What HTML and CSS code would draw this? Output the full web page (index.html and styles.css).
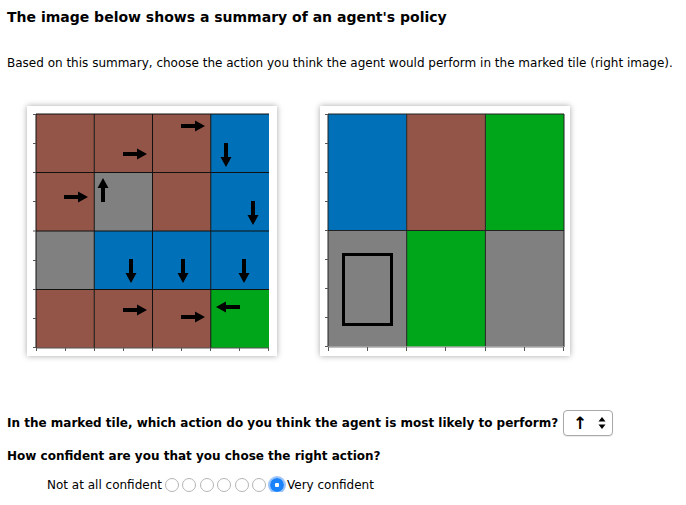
FILE: index.html
```html
<!DOCTYPE html>
<html>
<head>
<meta charset="utf-8">
<link rel="stylesheet" href="styles.css">
</head>
<body>
<h1 class="title">The image below shows a summary of an agent's policy</h1>
<p class="intro">Based on this summary, choose the action you think the agent would perform in the marked tile (right image).</p>

<div class="figures">
  <div class="frame">
    <svg width="250" height="250" viewBox="0 0 250 250">
      <defs>
        <path id="arr" d="M0 -2 H14 V-5.5 L24 0 L14 5.5 V2 H0 Z" fill="#000"/>
      </defs>
      <!-- row 0 -->
      <rect x="9" y="8" width="58.25" height="58.5" fill="#935548"/>
      <rect x="67.25" y="8" width="58.25" height="58.5" fill="#935548"/>
      <rect x="125.5" y="8" width="58.25" height="58.5" fill="#935548"/>
      <rect x="183.75" y="8" width="58.25" height="58.5" fill="#0070b8"/>
      <!-- row 1 -->
      <rect x="9" y="66.5" width="58.25" height="58.5" fill="#935548"/>
      <rect x="67.25" y="66.5" width="58.25" height="58.5" fill="#808080"/>
      <rect x="125.5" y="66.5" width="58.25" height="58.5" fill="#935548"/>
      <rect x="183.75" y="66.5" width="58.25" height="58.5" fill="#0070b8"/>
      <!-- row 2 -->
      <rect x="9" y="125" width="58.25" height="58.5" fill="#808080"/>
      <rect x="67.25" y="125" width="58.25" height="58.5" fill="#0070b8"/>
      <rect x="125.5" y="125" width="58.25" height="58.5" fill="#0070b8"/>
      <rect x="183.75" y="125" width="58.25" height="58.5" fill="#0070b8"/>
      <!-- row 3 -->
      <rect x="9" y="183.5" width="58.25" height="58.5" fill="#935548"/>
      <rect x="67.25" y="183.5" width="58.25" height="58.5" fill="#935548"/>
      <rect x="125.5" y="183.5" width="58.25" height="58.5" fill="#935548"/>
      <rect x="183.75" y="183.5" width="58.25" height="58.5" fill="#00a619"/>
      <!-- grid -->
      <g stroke="#111" stroke-width="1" fill="none">
        <line x1="67.25" y1="8" x2="67.25" y2="242"/>
        <line x1="125.5" y1="8" x2="125.5" y2="242"/>
        <line x1="183.75" y1="8" x2="183.75" y2="242"/>
        <line x1="9" y1="66.5" x2="242" y2="66.5"/>
        <line x1="9" y1="125" x2="242" y2="125"/>
        <line x1="9" y1="183.5" x2="242" y2="183.5"/>
        <line x1="9" y1="8" x2="242" y2="8"/>
        <line x1="9" y1="8" x2="9" y2="242"/>
      </g>
      <g stroke="#555" stroke-width="1">
        <line x1="9" y1="242" x2="242" y2="242"/>
        <line x1="6" y1="8.5" x2="9" y2="8.5"/>
        <line x1="6" y1="37.5" x2="9" y2="37.5"/>
        <line x1="6" y1="66.5" x2="9" y2="66.5"/>
        <line x1="6" y1="95.5" x2="9" y2="95.5"/>
        <line x1="6" y1="125" x2="9" y2="125"/>
        <line x1="6" y1="154.5" x2="9" y2="154.5"/>
        <line x1="6" y1="183.5" x2="9" y2="183.5"/>
        <line x1="6" y1="212.5" x2="9" y2="212.5"/>
        <line x1="6" y1="241.5" x2="9" y2="241.5"/>
        <line x1="9.5" y1="242" x2="9.5" y2="245"/>
        <line x1="38.5" y1="242" x2="38.5" y2="245"/>
        <line x1="67.5" y1="242" x2="67.5" y2="245"/>
        <line x1="96.5" y1="242" x2="96.5" y2="245"/>
        <line x1="125.5" y1="242" x2="125.5" y2="245"/>
        <line x1="154.5" y1="242" x2="154.5" y2="245"/>
        <line x1="183.5" y1="242" x2="183.5" y2="245"/>
        <line x1="212.5" y1="242" x2="212.5" y2="245"/>
        <line x1="241.5" y1="242" x2="241.5" y2="245"/>
      </g>
      <!-- arrows -->
      <use href="#arr" transform="translate(154 20)"/>
      <use href="#arr" transform="translate(96 48)"/>
      <use href="#arr" transform="translate(199 37) rotate(90)"/>
      <use href="#arr" transform="translate(37 91)"/>
      <use href="#arr" transform="translate(76 96) rotate(-90)"/>
      <use href="#arr" transform="translate(226 95) rotate(90)"/>
      <use href="#arr" transform="translate(104 153) rotate(90)"/>
      <use href="#arr" transform="translate(156 153) rotate(90)"/>
      <use href="#arr" transform="translate(217 153) rotate(90)"/>
      <use href="#arr" transform="translate(96 204)"/>
      <use href="#arr" transform="translate(154 211)"/>
      <use href="#arr" transform="translate(213 201) rotate(180)"/>
    </svg>
  </div>
  <div class="frame">
    <svg width="250" height="250" viewBox="0 0 250 250">
      <rect x="8" y="8" width="78.7" height="116.5" fill="#0070b8"/>
      <rect x="86.7" y="8" width="78.7" height="116.5" fill="#935548"/>
      <rect x="165.4" y="8" width="78.6" height="116.5" fill="#00a619"/>
      <rect x="8" y="124.5" width="78.7" height="116.5" fill="#808080"/>
      <rect x="86.7" y="124.5" width="78.7" height="116.5" fill="#00a619"/>
      <rect x="165.4" y="124.5" width="78.6" height="116.5" fill="#808080"/>
      <g stroke="#222" stroke-width="1" fill="none">
        <line x1="86.7" y1="8" x2="86.7" y2="241"/>
        <line x1="165.4" y1="8" x2="165.4" y2="241"/>
        <line x1="8" y1="124.5" x2="244" y2="124.5"/>
        <line x1="8" y1="8" x2="244" y2="8"/>
        <line x1="8" y1="8" x2="8" y2="241"/>
        <line x1="244" y1="8" x2="244" y2="241"/>
      </g>
      <g stroke="#555" stroke-width="1">
        <line x1="8" y1="241" x2="244" y2="241" stroke="#aaa" stroke-width="1.5"/>
        <line x1="5" y1="8.5" x2="8" y2="8.5"/>
        <line x1="5" y1="37.5" x2="8" y2="37.5"/>
        <line x1="5" y1="66.5" x2="8" y2="66.5"/>
        <line x1="5" y1="95.5" x2="8" y2="95.5"/>
        <line x1="5" y1="124.5" x2="8" y2="124.5"/>
        <line x1="5" y1="153.5" x2="8" y2="153.5"/>
        <line x1="5" y1="182.5" x2="8" y2="182.5"/>
        <line x1="5" y1="211.5" x2="8" y2="211.5"/>
        <line x1="5" y1="240.5" x2="8" y2="240.5"/>
        <line x1="8.5" y1="241" x2="8.5" y2="245"/>
        <line x1="47.5" y1="241" x2="47.5" y2="245"/>
        <line x1="86.5" y1="241" x2="86.5" y2="245"/>
        <line x1="125.5" y1="241" x2="125.5" y2="245"/>
        <line x1="165.5" y1="241" x2="165.5" y2="245"/>
        <line x1="204.5" y1="241" x2="204.5" y2="245"/>
        <line x1="243.5" y1="241" x2="243.5" y2="245"/>
      </g>
      <rect x="23.5" y="148.5" width="48" height="70" fill="none" stroke="#000" stroke-width="3"/>
    </svg>
  </div>
</div>

<div class="question">
  <span class="q-text">In the marked tile, which action do you think the agent is most likely to perform?</span>
  <div class="select">
    <span class="select-value">↑</span>
    <svg class="select-caret" width="8" height="14" viewBox="0 0 8 14">
      <path d="M4 1 L7.5 5.5 H0.5 Z M4 13 L7.5 8.5 H0.5 Z" fill="#000"/>
    </svg>
  </div>
</div>

<p class="q2">How confident are you that you chose the right action?</p>

<div class="scale">
  <span class="scale-label">Not at all confident</span>
  <span class="radio"></span>
  <span class="radio"></span>
  <span class="radio"></span>
  <span class="radio"></span>
  <span class="radio"></span>
  <span class="radio"></span>
  <span class="radio radio-on"></span>
  <span class="scale-label">Very confident</span>
</div>
</body>
</html>
```

FILE: styles.css
```css
html, body {
  margin: 0;
  padding: 0;
  background: #fff;
}

body {
  font-family: "DejaVu Sans", Verdana, sans-serif;
  color: #000;
  padding: 0 7px;
}

.title {
  font-size: 14px;
  font-weight: bold;
  line-height: 17px;
  margin: 9px 0 0;
}

.intro {
  font-size: 12px;
  line-height: 15px;
  margin: 30px 0 0;
}

.figures {
  display: flex;
  gap: 43px;
  margin: 35px 0 0 20px;
}

.frame {
  width: 250px;
  height: 250px;
  background: #fff;
  box-shadow: 0 0 6px rgba(0, 0, 0, 0.35);
}

.frame svg {
  display: block;
}

.question {
  display: flex;
  align-items: center;
  gap: 5px;
  margin-top: 54px;
}

.q-text {
  font-size: 12px;
  font-weight: bold;
}

.select {
  width: 50px;
  height: 26px;
  border: 1px solid #a9a9a9;
  border-radius: 4px;
  background: #fff;
  display: flex;
  align-items: center;
  justify-content: space-between;
  padding: 0 6px 0 9px;
  box-sizing: border-box;
  box-shadow: 0 1px 1px rgba(0, 0, 0, 0.08);
}

.select-value {
  font-size: 17px;
  font-weight: bold;
  line-height: 1;
}

.q2 {
  font-size: 12px;
  font-weight: bold;
  line-height: 15px;
  margin: 13px 0 0;
}

.scale {
  display: flex;
  align-items: center;
  margin: 14px 0 0 40px;
  font-size: 12px;
}

.radio {
  width: 14px;
  height: 14px;
  border: 1px solid #b5b5b5;
  border-radius: 50%;
  box-sizing: border-box;
  background: #fff;
  margin-left: 3.5px;
  flex: none;
}

.scale-label + .radio {
  margin-left: 3px;
}

.radio-on {
  width: 14px;
  height: 14px;
  margin-left: 3.5px;
  border: none;
  background: radial-gradient(circle, #fff 0 2px, #1a82fb 2.5px);
  box-shadow: 0 0 0 2px rgba(74, 148, 246, 0.55);
  margin-right: 3px;
}
```
